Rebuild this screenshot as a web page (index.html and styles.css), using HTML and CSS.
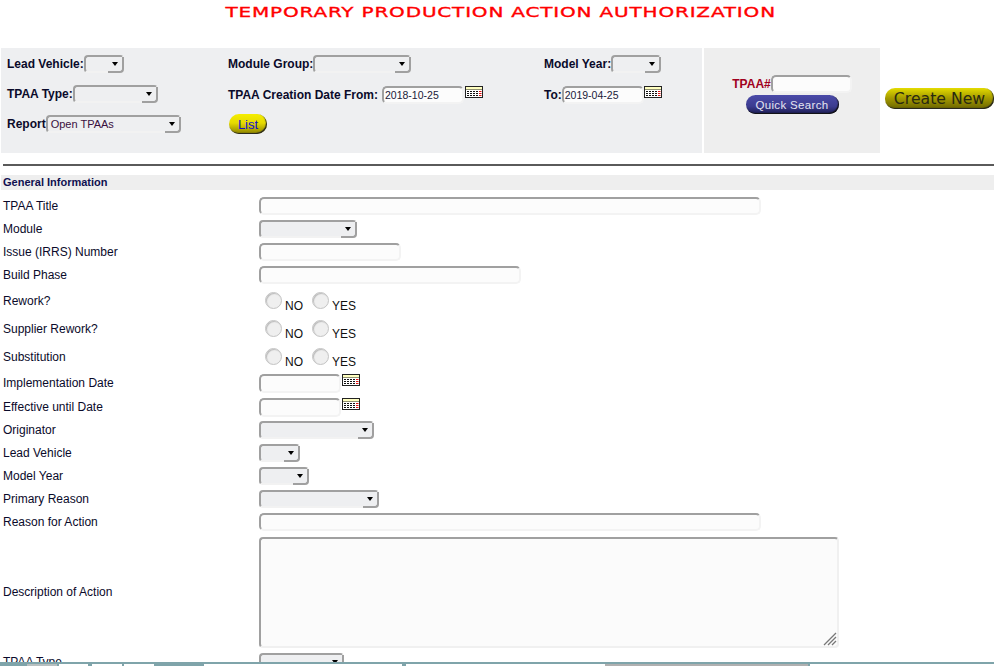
FILE: index.html
```html
<!DOCTYPE html>
<html lang="en">
<head>
<meta charset="utf-8">
<title>Temporary Production Action Authorization</title>
<link rel="stylesheet" href="styles.css">
</head>
<body>
<svg class="defs" width="0" height="0" aria-hidden="true">
  <symbol id="cal" viewBox="0 0 18 12">
    <rect x="0" y="0" width="18" height="12" fill="#222"/>
    <rect x="1" y="1" width="16" height="2.500" fill="#ffffc0"/>
    <rect x="1" y="4" width="16" height="7" fill="#fff"/>
    <path d="M2 5.500H13.500M2 7.500H13.500M2 9.500H13.500" stroke="#111" stroke-dasharray="2 1"/>
    <path d="M14 5.500H16.500M14 7.500H16.500M14 9.500H16.500" stroke="#e01010"/>
  </symbol>
</svg>

<h1 class="title"><span>TEMPORARY PRODUCTION ACTION AUTHORIZATION</span></h1>

<div class="search">
  <form class="filters">
    <div class="f-col f-col-1">
      <div class="f-row"><label>Lead Vehicle:</label><span class="sel w40"></span></div>
      <div class="f-row"><label>TPAA Type:</label><span class="sel w85"></span></div>
      <div class="f-row"><label>Report</label><span class="sel w135">Open TPAAs</span></div>
    </div>
    <div class="f-col f-col-2">
      <div class="f-row"><label>Module Group:</label><span class="sel w98"></span></div>
      <div class="f-row f-date"><label>TPAA Creation Date From:</label><span class="inp date date-from">2018-10-25</span><svg class="cal"><use href="#cal"/></svg></div>
      <div class="f-row"><button type="button" class="pill pill-list">List</button></div>
    </div>
    <div class="f-col f-col-3">
      <div class="f-row"><label>Model Year:</label><span class="sel w50"></span></div>
      <div class="f-row f-date"><label>To:</label><span class="inp date">2019-04-25</span><svg class="cal cal-to"><use href="#cal"/></svg></div>
    </div>
  </form>
  <div class="quick">
    <div class="quick-row"><label>TPAA#</label><span class="inp w81"></span></div>
    <button type="button" class="pill pill-quick">Quick Search</button>
  </div>
  <div class="create">
    <button type="button" class="pill pill-create">Create New</button>
  </div>
</div>

<hr class="rule">

<h2 class="section">General Information</h2>

<div class="form">
  <div class="row h23"><div class="lab">TPAA Title</div><span class="inp w502"></span></div>
  <div class="row h23"><div class="lab">Module</div><span class="sel w98"></span></div>
  <div class="row h23"><div class="lab">Issue (IRRS) Number</div><span class="inp w142"></span></div>
  <div class="row h23"><div class="lab">Build Phase</div><span class="inp w262"></span></div>
  <div class="row h28"><div class="lab">Rework?</div><div class="radios"><i class="radio"></i><span>NO</span><i class="radio"></i><span>YES</span></div></div>
  <div class="row h28"><div class="lab">Supplier Rework?</div><div class="radios"><i class="radio"></i><span>NO</span><i class="radio"></i><span>YES</span></div></div>
  <div class="row h28"><div class="lab">Substitution</div><div class="radios"><i class="radio"></i><span>NO</span><i class="radio"></i><span>YES</span></div></div>
  <div class="row h24"><div class="lab">Implementation Date</div><span class="inp w82 t19"></span><svg class="cal cal-form"><use href="#cal"/></svg></div>
  <div class="row h24"><div class="lab">Effective until Date</div><span class="inp w82 t19"></span><svg class="cal cal-form"><use href="#cal"/></svg></div>
  <div class="row h23"><div class="lab">Originator</div><span class="sel w115"></span></div>
  <div class="row h23"><div class="lab">Lead Vehicle</div><span class="sel w41"></span></div>
  <div class="row h23"><div class="lab">Model Year</div><span class="sel w50"></span></div>
  <div class="row h23"><div class="lab">Primary Reason</div><span class="sel w120"></span></div>
  <div class="row h23"><div class="lab">Reason for Action</div><span class="inp w502"></span></div>
  <div class="row rdesc"><div class="lab">Description of Action</div>
    <div class="area"><svg class="grip" viewBox="0 0 14 14" width="14" height="14"><path d="M1 13L13 1M5 13L13 5M9 13L13 9" stroke="#777" stroke-width="1.300"/></svg></div>
  </div>
  <div class="row h23"><div class="lab">TPAA Type</div><span class="sel w85"></span></div>
</div>

<div class="tabbar">
  <span class="tab t-a"></span><span class="tab t-b"></span><span class="tab t-c"></span><span class="tab t-d"></span><span class="tab t-e"></span><span class="tab t-f"></span><span class="tab t-g"></span><span class="tab t-h"></span><span class="tab t-i"></span>
</div>
</body>
</html>
```

FILE: styles.css
```css
html, body { margin: 0; padding: 0; height: 666px; overflow: hidden; background: #fff; }
body {
  position: relative;
  font-family: "Liberation Sans", Arial, sans-serif;
  font-size: 12px;
  color: #0a0a2a;
}
.defs { position: absolute; }

.title {
  margin: 0;
  height: 48px;
  padding: 3px 0 0 7px;
  box-sizing: border-box;
  text-align: center;
  font-family: "DejaVu Sans", sans-serif;
  font-weight: 400;
  font-size: 14.5px;
  line-height: 18px;
  color: #f00;
  white-space: nowrap;
}
.title span {
  display: inline-block;
  transform: scaleX(1.378);
  letter-spacing: .6px;
  -webkit-text-stroke: .35px #f00;
}

.search { display: flex; height: 105px; padding-left: 1px; gap: 2px; }
.filters { width: 701px; background: #eeeff1; display: flex; font-weight: 700; }
.f-col { padding-top: 1px; display: flex; flex-direction: column; }
.f-col-1 { width: 221px; padding-left: 6px; }
.f-col-2 { width: 316px; }
.f-row { height: 30px; display: flex; align-items: center; white-space: nowrap; box-sizing: border-box; }
.f-date { padding-top: 2px; }
.quick { width: 176px; background: #eee; display: flex; flex-direction: column; align-items: center; padding-top: 26px; box-sizing: border-box; }
.quick-row { display: flex; align-items: center; height: 20px; }
.quick-row label { color: #a00020; font-weight: 700; }
.create { flex: 1; display: flex; align-items: center; justify-content: flex-end; padding-bottom: 5px; }

.sel, .inp { display: inline-block; box-sizing: border-box; flex: none; }
.sel {
  position: relative;
  height: 18px;
  border: 2px solid #f2f2f2;
  border-top-color: #a0a0a0;
  border-left-color: #a0a0a0;
  border-radius: 4px;
  background: #eeeff1;
  font-weight: 400;
  font-size: 11px;
  line-height: 14px;
  padding-left: 3px;
  color: #3a1040;
}
.sel::before {
  content: "";
  position: absolute;
  right: -2px; bottom: -2px;
  width: 14px; height: 14px;
  border-right: 2px solid #a0a0a0;
  border-bottom: 2px solid #a0a0a0;
  border-bottom-right-radius: 4px;
  background: #eeeff1;
}
.sel::after {
  content: "";
  position: absolute;
  right: 4px; top: 5px;
  border: 3px solid transparent;
  border-top: 4px solid #000;
  border-bottom: 0;
}
.inp {
  height: 18px;
  border: 2px solid #f3f3f3;
  border-top-color: #a0a0a0;
  border-left-color: #a0a0a0;
  border-radius: 5px;
  background: #fcfcfc;
  font-weight: 400;
  font-size: 10.5px;
  line-height: 15px;
  padding-left: 1px;
  color: #1a1a3a;
}
.t19 { height: 19px; }
.date { width: 82px; }
.date-from { margin-left: 4px; }
.cal { width: 18px; height: 12px; flex: none; margin: -7px 0 0 1px; }
.cal-to { margin-left: 0; }
.cal-form { margin: -7px 0 0 1px; }

.w40 { width: 40px; } .w41 { width: 41px; } .w50 { width: 50px; } .w81 { width: 81px; }
.w82 { width: 82px; } .w85 { width: 85px; } .w98 { width: 98px; } .w115 { width: 115px; }
.w120 { width: 120px; } .w135 { width: 135px; } .w142 { width: 142px; } .w262 { width: 262px; } .w502 { width: 502px; }

.pill {
  display: block;
  padding: 0;
  border: 0;
  border-radius: 10px;
  font-family: "Liberation Sans", Arial, sans-serif;
  text-align: center;
}
.pill-list {
  width: 38px; height: 20px;
  margin-left: 1px;
  background: linear-gradient(#f5ee00 0%, #e6da00 45%, #8a8000 100%);
  box-shadow: inset -1px -1px 1px #222;
  color: #1010d0;
  font-size: 13px;
}
.pill-quick {
  width: 93px; height: 19px;
  margin-top: 1px;
  background: linear-gradient(#4a4aa8 0%, #3c3c90 60%, #1c1c50 100%);
  box-shadow: inset -1px -1px 1px #111;
  color: #e4e4f0;
  font-size: 11.5px;
  letter-spacing: .35px;
}
.pill-create {
  width: 109px; height: 21px;
  background: linear-gradient(#e4dc00 0%, #a89e00 45%, #6a6400 100%);
  box-shadow: inset -1px -1px 1px #222;
  color: #2a2a10;
  font-family: "DejaVu Sans", sans-serif;
  font-size: 15.7px;
}

.rule { margin: 11px 0 0 3px; height: 2px; border: 0; background: #5a5a5a; }

.section {
  margin: 9px 0 0 1px;
  height: 15px;
  padding-left: 2px;
  background: #eee;
  font-size: 11px;
  line-height: 15px;
  font-weight: 700;
  color: #101050;
}

.form { padding: 4px 0 0 3px; }
.row { display: flex; align-items: center; box-sizing: border-box; }
.h23 { height: 23px; } .h24 { height: 24px; padding-top: 2px; } .h28 { height: 28px; padding-top: 2px; }
.lab { width: 256px; flex: none; }
.rdesc { height: 117px; padding-top: 2px; }
.rdesc .lab { margin-top: -2px; }
.area {
  position: relative;
  width: 580px; height: 111px;
  box-sizing: border-box;
  border: 2px solid #f0f0f0;
  border-top-color: #a0a0a0;
  border-left-color: #a0a0a0;
  border-radius: 4px;
  background: #fbfbfb;
}
.grip { position: absolute; right: 0; bottom: 0; }
.radios { display: flex; align-items: center; margin-left: 6px; color: #111; }
.radios span { margin: 9px 9px 0 3px; }
.radio {
  width: 17px; height: 17px;
  box-sizing: border-box;
  border: 1px solid #c4c4c4;
  border-radius: 50%;
  background: #efefef;
  box-shadow: inset 1px 1px 1px #bbb;
  margin-top: -2px;
}

.tabbar {
  position: absolute;
  left: 0; right: 0; bottom: 0;
  height: 4px;
  padding-left: 27px;
  box-sizing: border-box;
  background: #7fa4aa;
  display: flex;
  align-items: flex-end;
}
.tab { display: block; height: 2px; background: #fff; flex: none; }
.t-a { width: 30px; background: #b8c0c0; margin-right: 2px; }
.t-b { width: 29px; margin-right: 4px; }
.t-c { width: 30px; margin-right: 2px; }
.t-d { width: 30px; margin-right: 3px; }
.t-e { width: 47px; background: #7fa4aa; }
.t-f { width: 198px; margin-right: 4px; }
.t-g { width: 199px; }
.t-h { width: 203px; background: #b0b0b0; margin-right: 2px; }
.t-i { flex: 1; }
```
